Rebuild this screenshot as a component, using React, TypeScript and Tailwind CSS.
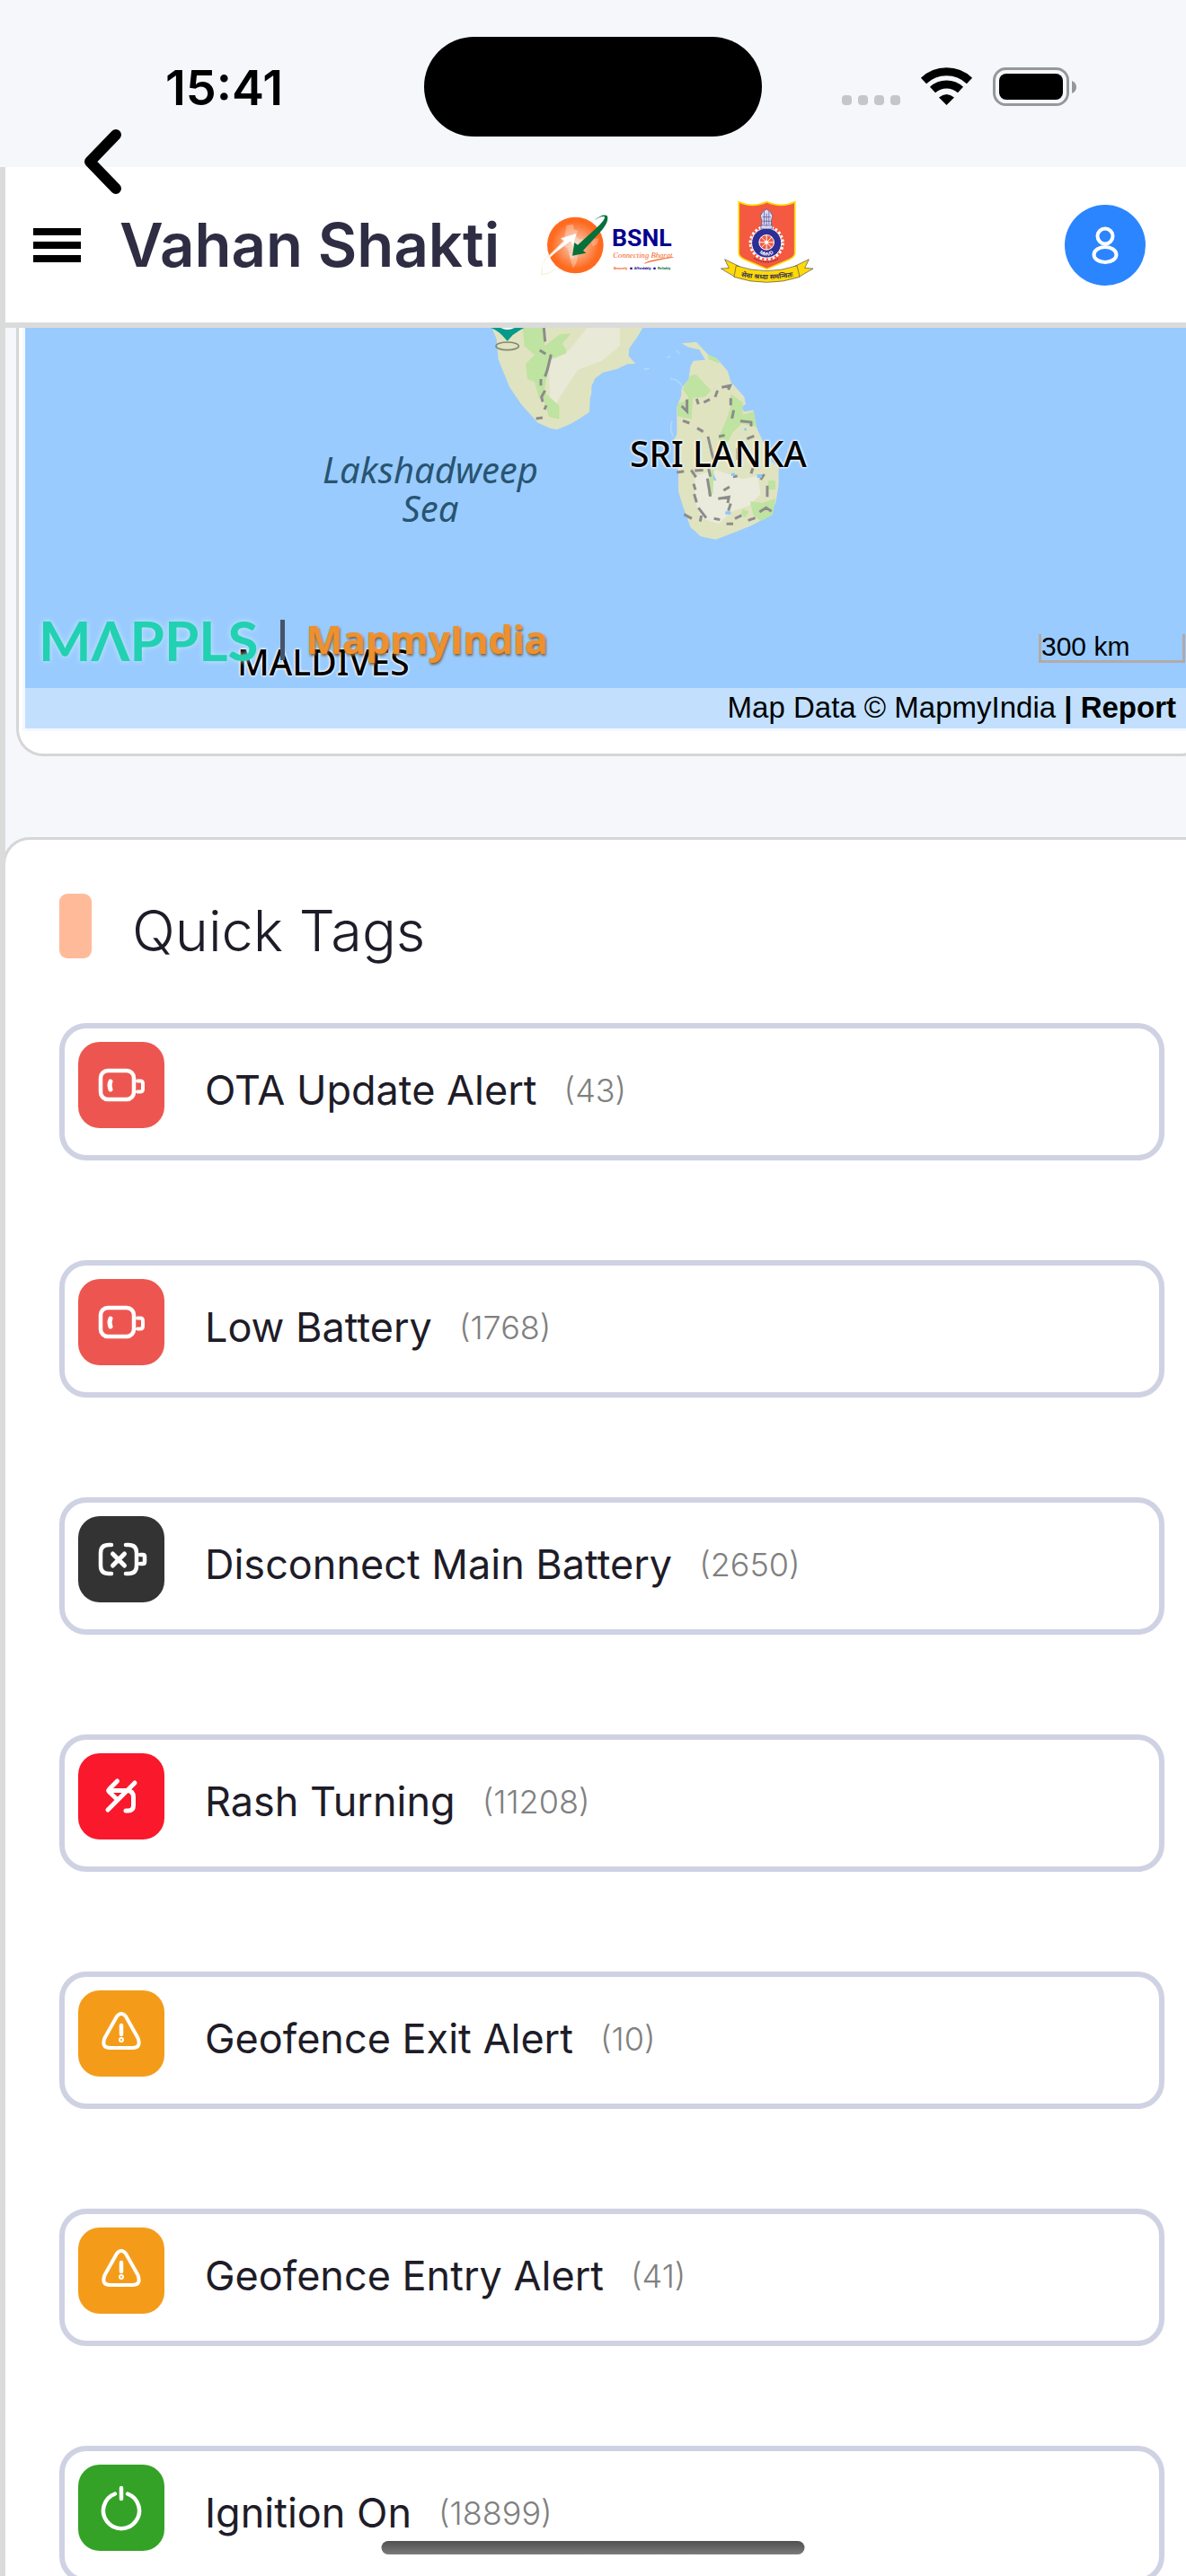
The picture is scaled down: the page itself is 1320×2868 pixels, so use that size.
import type { ReactNode } from "react"

type Tag = {
  name: string
  count: number
  color: string
  icon: ReactNode
}

const lowBattery = (
  <>
    <rect x="25" y="32" width="37" height="32" rx="8" />
    <path d="M36 44q-2 4 0 9" strokeWidth="5" />
    <path d="M66 43.500h3q3 0 3 3v6q0 3-3 3h-3" strokeWidth="4" />
  </>
)

const noBattery = (
  <>
    <path d="M37 32h-3q-9 0-9 9v14q0 9 9 9h3M53 32h3q9 0 9 9v14q0 9-9 9h-3" />
    <path d="m38.500 42 13 13m0-13-13 13" strokeWidth="5" />
    <path d="M69 43h3q2 0 2 2v6q0 2-2 2h-3" />
  </>
)

const rashTurn = (
  <g strokeWidth="5">
    <path d="M43.500 31 35 39.500q-2 2 0 4l8.500 8" />
    <path d="M34 41.500h20q7.500 0 7.500 7.500v9q0 6-6 6h-2.500" />
    <path d="m63 33-30 30" />
  </g>
)

const warning = (
  <>
    <path d="M43 29q5-6 10 0l13.500 24q4 11-6 11h-25q-10 0-6-11z" strokeWidth="4" />
    <path d="M48 39v10" />
    <circle cx="48" cy="55" r="1" strokeWidth="4" />
  </>
)

const power = (
  <>
    <path d="M41 32.500a20 20 0 1 0 14 0" />
    <path d="M48 26v12" />
  </>
)

const tags: Tag[] = [
  { name: "OTA Update Alert", count: 43, color: "bg-[#ed5650]", icon: lowBattery },
  { name: "Low Battery", count: 1768, color: "bg-[#ed5650]", icon: lowBattery },
  { name: "Disconnect Main Battery", count: 2650, color: "bg-[#333333]", icon: noBattery },
  { name: "Rash Turning", count: 11208, color: "bg-[#f9182c]", icon: rashTurn },
  { name: "Geofence Exit Alert", count: 10, color: "bg-[#f49c1a]", icon: warning },
  { name: "Geofence Entry Alert", count: 41, color: "bg-[#f49c1a]", icon: warning },
  { name: "Ignition On", count: 18899, color: "bg-[#34a227]", icon: power },
]

function StatusBar() {
  return (
    <div className="relative flex h-[186px] shrink-0 items-start justify-between pl-[184px] pr-[121px] pt-[66px]">
      <span className="text-[54px] font-semibold leading-[64px] text-black">15:41</span>
      <div className="absolute left-1/2 top-[41px] h-[111px] w-[376px] -translate-x-1/2 rounded-full bg-black" />
      <svg width="262" height="44" viewBox="0 0 262 44" className="mt-[9px]" aria-hidden="true">
        <g fill="#c5c6ca">
          <rect x="0" y="31" width="11" height="11" rx="4" />
          <rect x="18" y="31" width="11" height="11" rx="4" />
          <rect x="36" y="31" width="11" height="11" rx="4" />
          <rect x="54" y="31" width="11" height="11" rx="4" />
        </g>
        <g fill="none" stroke="#000" strokeWidth="9">
          <path d="M91 15a37 37 0 0 1 51 0" />
          <path d="M101 25a23 23 0 0 1 31 0" />
        </g>
        <path d="M116.500 42l-8.500-8.500q8.500-7 17 0z" />
        <rect x="169.500" y="1.500" width="82" height="40" rx="13" fill="none" stroke="#96979a" strokeWidth="3" />
        <rect x="175" y="7" width="71" height="29" rx="8" />
        <path d="M256 15q5 2 5 7t-5 7z" fill="#96979a" />
      </svg>
    </div>
  )
}

function BsnlLogo() {
  return (
    <svg width="150" height="70" viewBox="36 84 450 210" role="img" aria-label="BSNL">
      <defs>
        <radialGradient id="globe">
          <stop offset="0" stopColor="#f3d9cb" />
          <stop offset="0.450" stopColor="#fa9d6d" />
          <stop offset="0.850" stopColor="#ff6a1f" />
        </radialGradient>
      </defs>
      <circle cx="151" cy="189" r="94" fill="url(#globe)" />
      <path d="M122 122l22-2 2 16 14 6-8 14 10 12 22 2-4 12-14 8-4 26-8 34-10 16-8-22-10-44-14-8-14 4 12-18 6-22z" fill="#fff" opacity="0.300" />
      <path d="M200 170l30-4-6 18-14 10zM130 215l16 0 2 18-14 2z" fill="#fff" opacity="0.250" />
      <path d="M103 166l8 9-60 60q-14 24-13 52 24 0 46-18" fill="none" stroke="#f8dfb5" strokeWidth="2" />
      <path d="M155 150l-52 16 11 9-60 58q-14 20-15 34 12-24 42-50l54-42 8 14z" fill="#fff" />
      <path d="M141 224l7-44 11 8 64-58q28-26 26-36-10-4-35 12 30-24 43-15 8 15-16 46l-64 70 10 8z" fill="#07703b" />
      <text x="273" y="192" fontSize="80" fontWeight="700" fill="#07008f" fontFamily="Roboto, sans-serif">BSNL</text>
      <text x="277" y="230" fontSize="26" fontStyle="italic" fill="#f4631e" fontFamily="'Liberation Serif', serif">Connecting Bharat</text>
      <path d="M381 250q24-14 98-21-60 10-98 21z" fill="#f4631e" stroke="#f4631e" />
      <g fontSize="12" fontWeight="700" fontFamily="Roboto, sans-serif">
        <text x="278" y="271" fill="#f4631e">Securely</text>
        <text x="347" y="271" fill="#07008f">Affordably</text>
        <text x="426" y="271" fill="#07703b">Reliably</text>
      </g>
      <path d="M334 263h7v7h-7zM412 263h7v7h-7z" fill="#07008f" />
    </svg>
  )
}

function MmvdLogo() {
  return (
    <svg width="105" height="99" viewBox="632 40 314 298" role="img" aria-label="MMVD">
      <path d="M695 45q45 22 94 0 49 22 94 0v172q0 12-20 22l-74 31-74-31q-20-10-20-22z" fill="#f35a41" stroke="#ffda05" strokeWidth="5" />
      <circle cx="788" cy="183" r="55" fill="none" stroke="#fff" strokeWidth="8" strokeDasharray="8 6.400" />
      <circle cx="788" cy="183" r="50" fill="#2d2f96" stroke="#fff" strokeWidth="3" />
      <circle cx="788" cy="181" r="25" fill="#f35a41" stroke="#fff" strokeWidth="3" />
      <path d="M788 156v50M763 181h50M770 163l36 36M806 163l-36 36" stroke="#fff" strokeWidth="3" />
      <circle cx="788" cy="181" r="6" fill="#fff" />
      <g fill="#d9d9ee" stroke="#4b4a92" strokeWidth="2">
        <path d="M772 105q-8-14 0-20 2-10 16-15 14 5 16 15 8 6 0 20v26h-32z" />
        <path d="M769 124h38v12h-38z" />
        <path d="M780 76v45M788 84v42M796 76v45M774 96h28M774 110h28" fill="none" />
      </g>
      <path id="wheel-rim" d="M754 183a34 34 0 0 0 68 0" transform="translate(0 9)" fill="none" />
      <text fontSize="17" fontWeight="700" fill="#fff" fontFamily="'Liberation Sans', sans-serif">
        <textPath href="#wheel-rim" startOffset="50%" textAnchor="middle">MMVD</textPath>
      </text>
      <path d="M746 234q42 26 84 0" fill="none" stroke="#8d2b3d" strokeWidth="4" strokeDasharray="5 3" />
      <g fill="#ffda05" stroke="#4a4764" strokeWidth="2">
        <path d="M698 262l-50-24 14 29-27 2 46 27zM880 262l50-24-14 29 28 2-46 27z" />
        <path d="M686 259q102 35 204 0l9 38q-110 36-220 0z" />
      </g>
      <path id="ribbon-line" d="M694 294q95 20 192 0" fill="none" />
      <text fontSize="23" fontWeight="700" fill="#3c3558" fontFamily="'Noto Sans Devanagari', 'Noto Sans', sans-serif">
        <textPath href="#ribbon-line" startOffset="50%" textAnchor="middle">सेवा श्रध्दा समन्वितः</textPath>
      </text>
    </svg>
  )
}

function Header() {
  return (
    <header className="relative flex h-[179px] shrink-0 items-center border-b-6 border-[#dbdbdb] bg-white pl-[31px] pr-[45px]">
      <button type="button" aria-label="Back" className="absolute -top-[42px] left-[87px]">
        <svg width="42" height="72" viewBox="0 0 42 72" fill="none" stroke="#000" strokeWidth="12" strokeLinecap="round" strokeLinejoin="round">
          <path d="M36 6 7 36l29 30" />
        </svg>
      </button>
      <button type="button" aria-label="Menu" className="flex w-[53px] flex-col gap-[7px]">
        <span className="h-2 bg-black" />
        <span className="h-2 bg-black" />
        <span className="h-2 bg-black" />
      </button>
      <h1 className="ml-[43px] text-[67px] font-semibold leading-[80px] text-[#2f2d43]">Vahan Shakti</h1>
      <div className="ml-[46px] flex items-center gap-[49px]">
        <BsnlLogo />
        <MmvdLogo />
      </div>
      <button type="button" aria-label="Account" className="ml-auto flex size-[90px] items-center justify-center rounded-full bg-[#2b85ff]">
        <svg width="32" height="44" viewBox="0 0 32 44" fill="none" stroke="#fff" strokeWidth="4">
          <circle cx="16" cy="12" r="8.500" />
          <ellipse cx="16" cy="32.500" rx="12.500" ry="8.500" />
        </svg>
      </button>
    </header>
  )
}

function Land() {
  return (
    <svg width="900" height="446" viewBox="0 0 900 446" className="absolute left-0 top-0" aria-hidden="true">
      <g transform="translate(472 -15) scale(.3333)">
        <path d="M140 40l18 42 6 68 20 50 18 44 38 56 56 62 40 18 24 5 40-17 30-16 38-26 2-44 5-20v-22l12-26 26-20 48-12 34-16 27-1-23-26 2-25 24-34 22-36z" fill="#e0e3c0" />
        <path d="M330 150l70-30 60-75 110 0 0 60-60 50-80 30-60 90-30 60z" fill="#e8e9d6" />
        <path d="M245 45l70 0 4 60 50-38 38-3-30 34 14 20 0 12-50 20-16 60-8 50 50 45 0 45-34-8-14-46-20-20-14-50-24-10-6-50 30-30-34-30z" fill="#bfe3a0" />
        <path d="M316 45l4 46M302 120l20 12M340 134l-12 50-8 24M306 216l0 22M320 254l-12 22 4 16M324 304l-6 14M290 348l22-3" fill="none" stroke="#8c8c8c" strokeWidth="9" />
        <ellipse cx="194" cy="106" rx="38" ry="13" fill="none" stroke="#858774" strokeWidth="5" />
        <path d="M138 45q22 8 40 26l16 18 18-20q20-15 38-24z" fill="#07998a" />
        <path d="M170 44q24 14 50 0z" fill="#fff" />
        <path d="M775 97l50-5 40 43 35 20 30 35 10 35 45 50 5 25-15 10 10 15 30-5 10 55 25 55 15 10 10 50 25 20v60l-10 60-25 45-55 30-50 20-70 27-50-10-35-32-10-30-15-40-15-50v-60l-5-90-10-20 10-20v-90l15-40v-20l25-35 5-40 10-20 40-3-20-34-35-8z" fill="#e0e3c0" />
        <path d="M820 540l70-20 90 30 50-10 10 60-40 40-60 20-40 40-60-20-20-60z" fill="#eaebdc" />
        <path d="M806 205l18-5 50 55-20 20-40 5-5 70-47-10v-40l38-20-20-30zM865 135l30 12 8 18-38-16zM940 265l40 30 0 40 38-10 8 50-50-10-30 30-20 40-28-20 30-70 12-40zM1005 625l40 5 45-15-10 55-40 20-25-20zM1065 555l24 0 0 30-25 0zM980 650l20 8-10 20-16-8zM870 520l14 0-4 80-16 6z" fill="#bfe3a0" />
        <path d="M794 284l0 40-18-18M780 355l22 8M826 282l6 18M850 294l20-10M888 276l8-22M910 244l28-6-6 14M940 280v24M950 320l-6 28M972 356l36 4 0 14M828 380l20 12M864 408l14 60 6 20M900 408l20-4M1018 406l-24 10M760 528l24-4M808 520l16 24M820 522l28-2M866 516l6 26M862 548l10 60M816 566l6 20M818 600l8 28M948 542l14-2M1014 514l-6 18M1052 534l-12 18M1062 572v38M936 576l-20 12M898 616l36-6-4 20M940 632l-8 24M784 668l26 14M832 646l26 34M838 692l4-20M884 682l20 4M926 700l22 0M954 682l22-10M998 688l24-8M1036 660l22-14 18 12M962 446v40" fill="none" stroke="#8c8c8c" strokeWidth="9" />
        <path d="M922 658h18v10h-18zM1028 534h16v12h-16zM880 530l12 24-8 2zM942 530h12v10h-12zM985 380h8v8h-8z" fill="#8ac6fb" />
        <path d="M728 145l10-6M760 120l8 12M738 214q30 4 42 30M650 184l18-4M744 358q-10 20 4 50" fill="none" stroke="#b7dcfb" strokeWidth="4" />
      </g>
    </svg>
  )
}

function MapCard() {
  return (
    <section className="ml-[12px] -mr-[24px] rounded-b-[30px] border-x-3 border-b-3 border-[#d6d6d6] bg-white pb-[25px] pl-1">
      <div className="border-b-3 border-l-3 border-[#f5f8ff]">
        <div className="relative h-[446px] overflow-hidden bg-[#99cbfe]">
          <Land />
          <span className="absolute left-[331px] top-[136px] text-center font-['Noto_Sans',sans-serif] text-[40px] italic leading-[43px] text-[#285471]">
            Lakshadweep
            <br />
            Sea
          </span>
          <span className="absolute left-[673px] top-[120px] font-['Noto_Sans',sans-serif] text-[39px] font-medium leading-[40px] text-black [text-shadow:0_0_3px_#fff,0_0_3px_#fff,0_0_3px_#fff]">
            SRI LANKA
          </span>
          <span className="absolute left-[236px] top-[352px] font-['Noto_Sans',sans-serif] text-[39px] font-medium leading-[40px] text-black [text-shadow:0_0_3px_#fff,0_0_3px_#fff,0_0_3px_#fff]">
            MALDIVES
          </span>
          <a href="#mappls" className="absolute left-[15px] top-[312px] flex items-center whitespace-nowrap">
            <span className="font-['Lato',sans-serif] text-[62px] font-bold leading-[70px] text-[#22d0b2] [text-shadow:0_0_6px_#c8ecf8]">MΛPPLS</span>
            <span className="mx-[24px] h-[45px] w-[5px] bg-[#45546b]" />
            <span className="font-['Open_Sans',sans-serif] text-[43px] font-bold leading-[70px] text-[#ef902e] [text-shadow:1px_2px_3px_#7a5b35]">MapmyIndia</span>
          </a>
          <div className="absolute right-[22px] bottom-[73px] h-[32px] w-[163px] border-x-3 border-b-3 border-[#b3aaa8] font-['Liberation_Sans',sans-serif] text-[30px] leading-[27px] text-black">
            300 km
          </div>
          <div className="absolute inset-x-0 bottom-0 h-[45px] bg-white/40 pr-[32px] text-right font-['Liberation_Sans',sans-serif] text-[33px] leading-[43px] text-black">
            Map Data © MapmyIndia{" "}
            <b>
              | <a href="#report">Report</a>
            </b>
          </div>
        </div>
      </div>
    </section>
  )
}

function QuickTags() {
  return (
    <section className="-ml-[3px] -mr-[24px] mt-[90px] rounded-tl-[30px] border-l-3 border-t-3 border-[#d6d6d6] bg-white pl-[60px] pr-[48px] pt-[60px]">
      <div className="flex items-start gap-[45px]">
        <span className="h-[72px] w-[36px] rounded-[9px] bg-[#ffbb99]" />
        <h2 className="mt-[5px] text-[63px] font-light leading-[72px] text-[#1e1c28]">Quick Tags</h2>
      </div>
      <ul className="mt-[67px] flex flex-col gap-[111px]">
        {tags.map((tag) => (
          <li key={tag.name}>
            <button type="button" className="flex h-[153px] w-full items-center rounded-[30px] border-6 border-[#cfd2e3] bg-white pb-1 pl-[15px] text-left">
              <span className={`size-24 self-start mt-[15px] rounded-3xl ${tag.color}`}>
                <svg viewBox="0 0 96 96" fill="none" stroke="#fff" strokeWidth="4.500" strokeLinecap="round" strokeLinejoin="round" aria-hidden="true">
                  {tag.icon}
                </svg>
              </span>
              <span className="ml-[45px] text-[45px] leading-[52px] text-[#1e1c28]">{tag.name}</span>
              <span className="ml-[30px] text-[36px] font-light leading-[52px] text-[#808080]">({tag.count})</span>
            </button>
          </li>
        ))}
      </ul>
    </section>
  )
}

export default function App() {
  return (
    <div className="relative flex h-screen flex-col overflow-hidden bg-[#f5f7fb] font-['Inter',sans-serif]">
      <StatusBar />
      <div className="flex min-h-0 flex-1 flex-col border-l-6 border-[#dbdbdb]">
        <Header />
        <main className="min-h-0 flex-1 overflow-hidden">
          <MapCard />
          <QuickTags />
        </main>
      </div>
      <div className="absolute bottom-6 left-1/2 h-[15px] w-[471px] -translate-x-1/2 rounded-full bg-linear-to-b from-[#505050] to-[#7b7b7b]" />
    </div>
  )
}
